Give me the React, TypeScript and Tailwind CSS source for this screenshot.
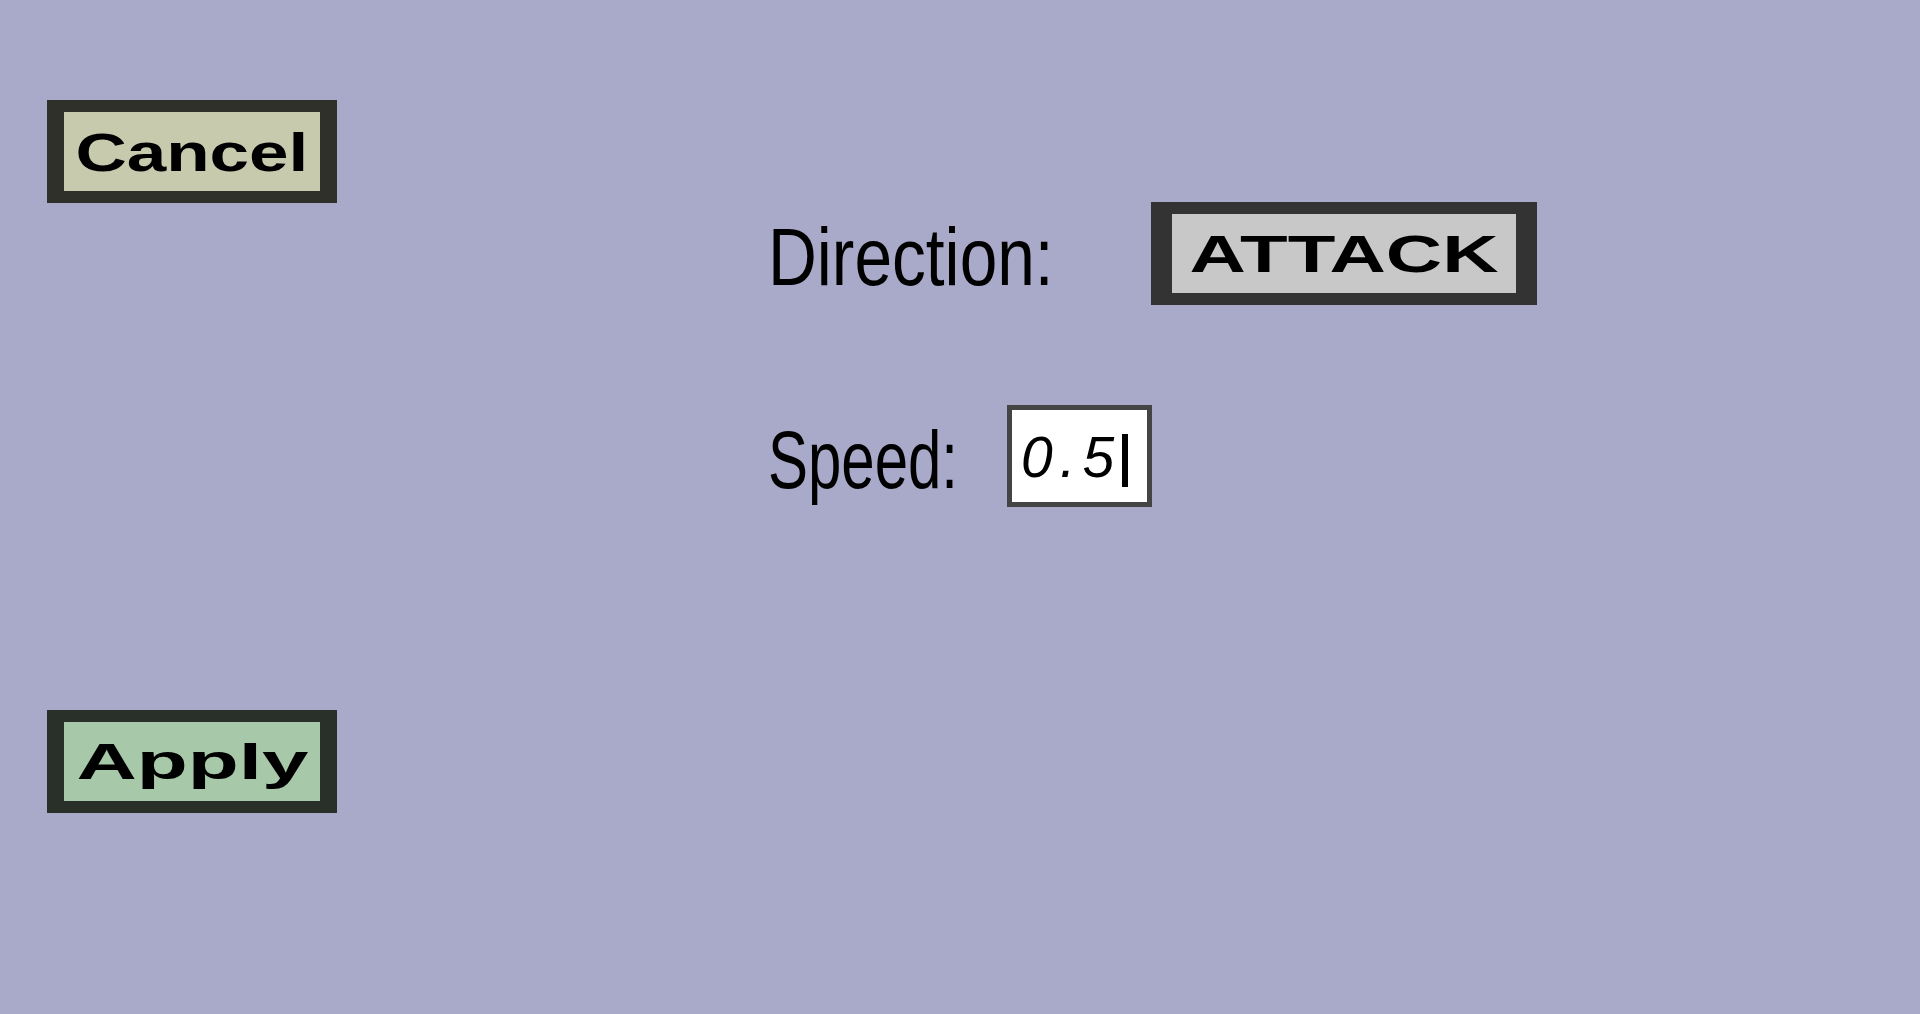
const font = "font-['Liberation_Sans',Arial,sans-serif]";

const PanelButton = ({
  label,
  boxClass,
  textClass,
}: {
  label: string;
  boxClass: string;
  textClass: string;
}) => {
  return (
    <div className={`flex items-center justify-center ${boxClass}`}>
      <span className={`${font} font-bold leading-none text-black whitespace-nowrap ${textClass}`}>
        {label}
      </span>
    </div>
  );
};

const App = () => {
  return (
    <div className="w-full h-[1014px] bg-[#a9a9c9] flex overflow-hidden">
      <div className="flex flex-col pl-[47px] pt-[100px] gap-[507px] shrink-0">
        <PanelButton
          label="Cancel"
          boxClass="w-[290px] h-[103px] border-x-[17px] border-y-[12px] border-[#2f3029] bg-[#c8caad]"
          textClass="text-[53px] scale-x-[1.34] pt-[2px]"
        />
        <PanelButton
          label="Apply"
          boxClass="w-[290px] h-[103px] border-x-[17px] border-y-[12px] border-[#29302a] bg-[#a8c8aa]"
          textClass="text-[50px] scale-x-[1.67]"
        />
      </div>

      <div className="flex flex-col ml-[431px] pt-[202px] gap-[100px]">
        <div className="flex items-center">
          <div className="w-[383px] shrink-0 pt-[8px]">
            <span className={`${font} inline-block text-[81px] leading-none text-black origin-left scale-x-[0.835] whitespace-nowrap`}>
              Direction:
            </span>
          </div>
          <PanelButton
            label="ATTACK"
            boxClass="w-[386px] h-[103px] border-x-[21px] border-y-[12px] border-[#333333] bg-[#c8c8c8]"
            textClass="text-[52px] scale-x-[1.5]"
          />
        </div>

        <div className="flex items-center">
          <div className="w-[239px] shrink-0 pt-[8px]">
            <span className={`${font} inline-block text-[81px] leading-none text-black origin-left scale-x-[0.74] whitespace-nowrap`}>
              Speed:
            </span>
          </div>
          <div className="w-[145px] h-[102px] border-[5px] border-[#444444] bg-white flex items-center pl-[9px]">
            <span className={`${font} italic text-[57px] leading-none text-black tracking-[7px] pt-[2px]`}>0.5</span>
            <div className="w-[6px] h-[53px] bg-black ml-[1px] mt-[8px]" />
          </div>
        </div>
      </div>
    </div>
  );
};

export default App;
